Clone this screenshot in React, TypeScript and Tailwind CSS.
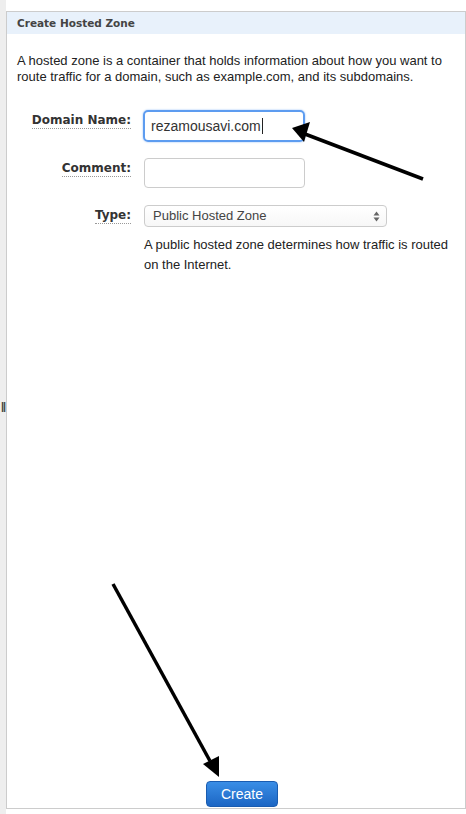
import React from 'react';

const font = { fontFamily: '"Liberation Sans", Arial, sans-serif' };
const verdana = { fontFamily: '"DejaVu Sans", Verdana, sans-serif' };

const Label: React.FC<{ text: string }> = ({ text }) => (
    <div className="w-[124px] shrink-0 flex justify-end pt-[2px]">
        <span className="text-[12px] font-bold text-[#333] leading-[16px] border-b border-dotted border-[#999]" style={verdana}>{text}</span>
    </div>
);

const App: React.FC = () => {
    return (
        <div className="w-[466px] h-[814px] flex bg-white overflow-hidden relative" style={font}>
            <div className="w-[6px] shrink-0 bg-[#eeeeee] flex items-center pb-[2px]">
                <span className="text-[11px] leading-none text-[#444] font-bold pl-[1px] tracking-[-1px]">||</span>
            </div>
            <div className="flex-1 pt-[11px] pb-[5px]">
                <div className="h-full border border-[#cccccc] flex flex-col">
                    <div className="h-[22px] bg-[#e8f1fb] px-[10px] flex items-center pt-[2px]">
                        <span className="text-[10.5px] font-bold text-[#444]" style={verdana}>Create Hosted Zone</span>
                    </div>
                    <p className="px-[10px] mt-[19px] text-[13px] leading-[16px] text-[#222]">
                        A hosted zone is a container that holds information about how you want to route traffic for a domain, such as example.com, and its subdomains.
                    </p>
                    <div className="mt-[25px] flex flex-col">
                        <div className="flex items-start">
                            <Label text="Domain Name:" />
                            <div className="ml-[12px] w-[162px] h-[32px] rounded-[5px] border-2 border-[#5d9cf0] shadow-[0_0_2px_#8ab8f5] flex items-center px-[6px]">
                                <span className="text-[14px] text-[#333]">rezamousavi.com</span>
                                <span className="w-px h-[16px] bg-[#222] ml-[1px]"></span>
                            </div>
                        </div>
                        <div className="flex items-start mt-[16px]">
                            <Label text="Comment:" />
                            <div className="ml-[13px] w-[161px] h-[30px] rounded-[4px] border border-[#cccccc] bg-white"></div>
                        </div>
                        <div className="flex items-start mt-[17px]">
                            <Label text="Type:" />
                            <div className="ml-[13px] flex flex-col">
                                <div className="w-[243px] h-[22px] rounded-[4px] border border-[#cccccc] bg-gradient-to-b from-white to-[#f7f7f7] flex items-center justify-between pl-[8px] pr-[6px]">
                                    <span className="text-[13px] text-[#444]">Public Hosted Zone</span>
                                    <svg width="7" height="11" viewBox="0 0 7 11">
                                        <path d="M3.5 0.5 L6.5 4.5 L0.5 4.5 Z" fill="#666" />
                                        <path d="M0.5 6.5 L6.5 6.5 L3.5 10.5 Z" fill="#666" />
                                    </svg>
                                </div>
                                <p className="mt-[8px] w-[310px] text-[13px] leading-[20px] text-[#222]">
                                    A public hosted zone determines how traffic is routed on the Internet.
                                </p>
                            </div>
                        </div>
                    </div>
                    <div className="mt-auto pl-[199px] pb-[1px]">
                        <button className="w-[72px] h-[26px] rounded-[4px] bg-gradient-to-b from-[#3a8ee6] to-[#1c66c4] border border-[#1a5cb0] text-white text-[14px] leading-none">
                            Create
                        </button>
                    </div>
                </div>
            </div>
            <svg className="absolute inset-0 pointer-events-none" width="466" height="814">
                <line x1="423" y1="179" x2="305" y2="134" stroke="#000" strokeWidth="3.5" />
                <path d="M292 128 L310 122 L304 142 Z" fill="#000" />
                <line x1="113" y1="584" x2="210" y2="761" stroke="#000" strokeWidth="3.5" />
                <path d="M219 777 L203 764 L219 756 Z" fill="#000" />
            </svg>
        </div>
    );
};

export default App;
